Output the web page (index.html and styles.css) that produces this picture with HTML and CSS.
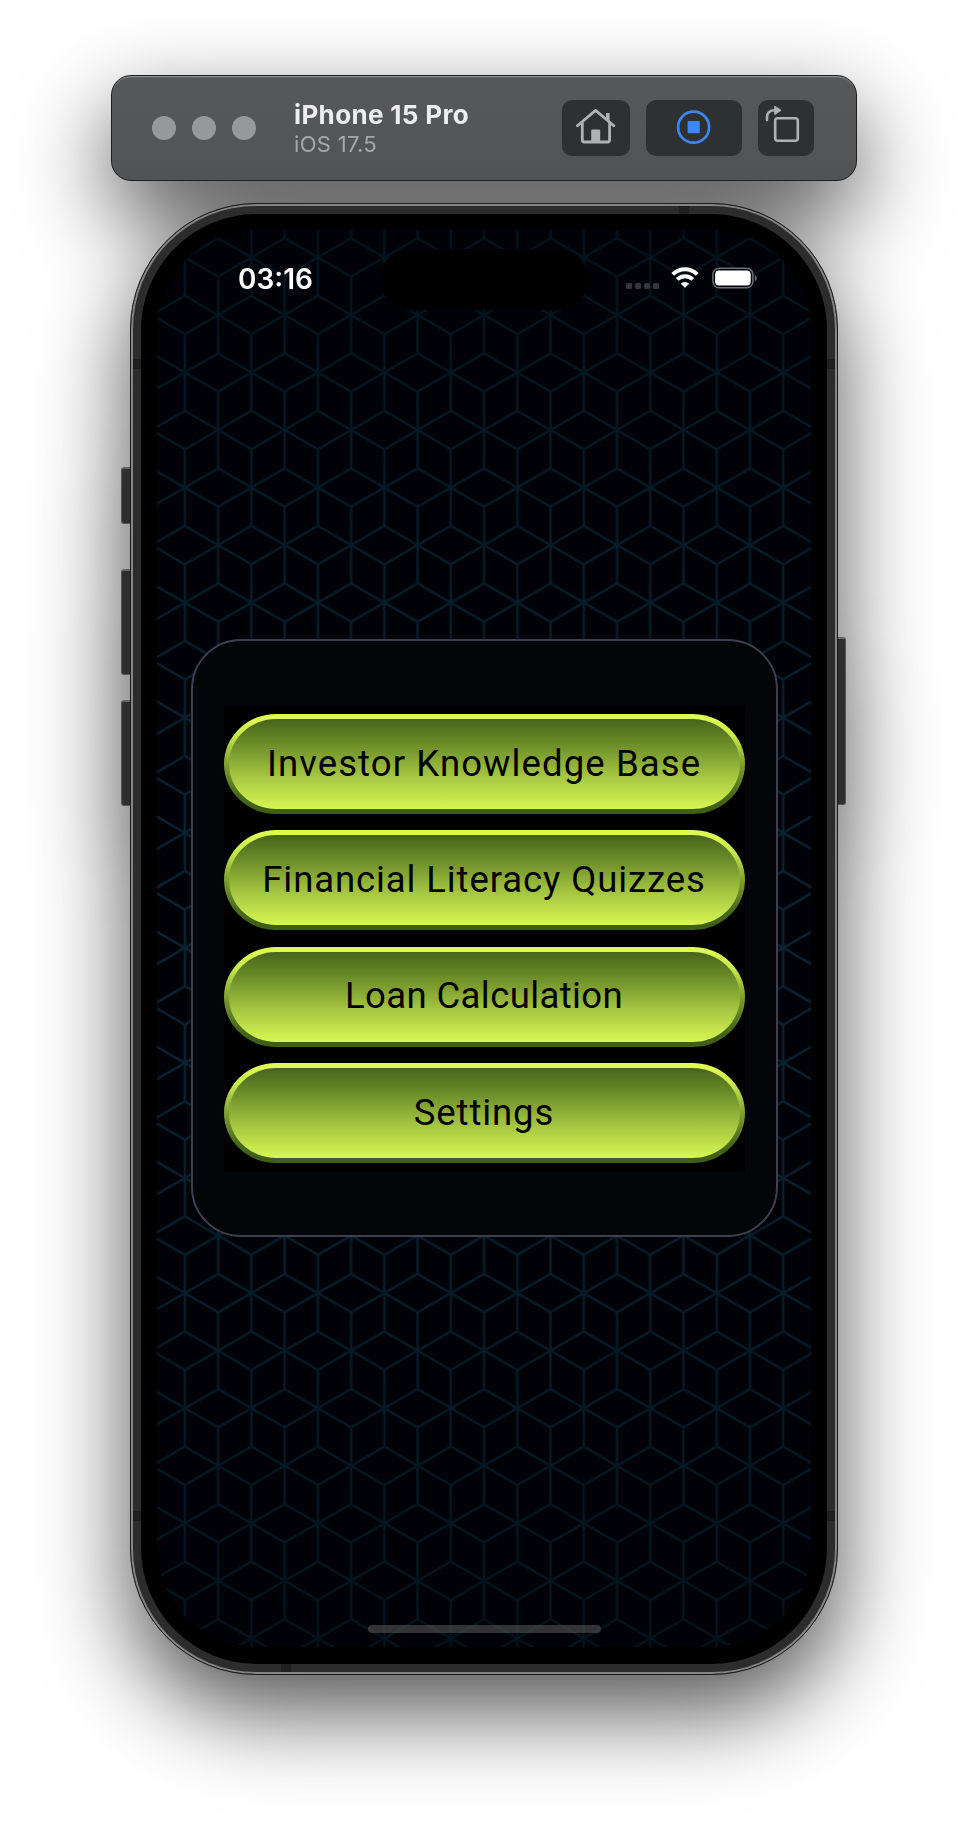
FILE: index.html
```html
<!DOCTYPE html>
<html lang="en">
<head>
<meta charset="utf-8">
<title>iPhone 15 Pro – iOS 17.5</title>
<link rel="stylesheet" href="styles.css">
</head>
<body>
<main class="simulator">
  <header class="toolbar">
    <div class="lights"><i></i><i></i><i></i></div>
    <div class="title">
      <strong>iPhone 15 Pro</strong>
      <span>iOS 17.5</span>
    </div>
    <div class="tools">
      <button class="tool tool-home" aria-label="Home">
        <svg width="40" height="38" viewBox="0 0 40 38" fill="none" stroke="#b0b1b2" stroke-width="2.8" stroke-linecap="round" stroke-linejoin="round"><path d="M1.4 18.7 19.6 3.4 37.8 18.7M6.3 15.5V33a2 2 0 0 0 2 2H31.6a2 2 0 0 0 2-2V15.5"/><path d="M30 6h3.6v9l-3.6-3.2zM15.2 35V23.4a1 1 0 0 1 1-1h7a1 1 0 0 1 1 1V35z" fill="#b0b1b2" stroke="none"/></svg>
      </button>
      <button class="tool tool-record" aria-label="Stop">
        <svg width="36" height="36" viewBox="0 0 36 36"><circle cx="17.6" cy="18.2" r="15.5" fill="none" stroke="#3d86f7" stroke-width="2.7"/><rect x="11.6" y="12" width="12.2" height="12.2" rx="1" fill="#3d86f7"/></svg>
      </button>
      <button class="tool tool-rotate" aria-label="Rotate">
        <svg width="56" height="56" viewBox="0 0 56 56" fill="none" stroke="#b0b1b2" stroke-width="2.6" stroke-linecap="round"><rect x="17.2" y="18.2" width="22.6" height="22.6" rx="2.5"/><path d="M9 20v-2.5Q9 10.3 17 10.3"/><path d="M17 6.4 23 10.3 17 14.4z" fill="#b0b1b2" stroke-width="1" stroke-linejoin="round"/></svg>
      </button>
    </div>
  </header>

  <section class="phone">
    <i class="key key-action"></i><i class="key key-up"></i><i class="key key-down"></i><i class="key key-power"></i>
    <div class="frame">
      <i class="band band-l1"></i><i class="band band-l2"></i><i class="band band-r1"></i><i class="band band-r2"></i><i class="band band-t"></i><i class="band band-b"></i>
      <div class="bezel">
        <div class="screen">
          <svg class="cubes" width="654" height="1417" aria-hidden="true">
            <defs>
              <linearGradient id="line" x1="0" y1="0" x2="0" y2="1417" gradientUnits="userSpaceOnUse">
                <stop offset="0" stop-color="#02131c"/><stop offset=".3" stop-color="#061f2b"/><stop offset=".5" stop-color="#082430"/><stop offset=".7" stop-color="#061f2b"/><stop offset="1" stop-color="#02131c"/>
              </linearGradient>
              <pattern id="cube" width="66.48" height="115.08" patternUnits="userSpaceOnUse" patternTransform="translate(27.9 27.4)">
                <g stroke="#fff" stroke-width="2.5" fill="none">
                  <path d="M0 0V38.36L33.24 57.54 66.48 38.36V0M0 115.08V76.72M66.48 115.08V76.72M0 76.72 33.24 57.54 66.48 76.72M0 0 33.24 19.18 66.48 0M0 115.08 33.24 95.9 66.48 115.08M33.24 19.18V95.9"/>
                </g>
              </pattern>
              <mask id="grid"><rect width="654" height="1417" fill="url(#cube)"/></mask>
            </defs>
            <rect width="654" height="1417" fill="url(#line)" mask="url(#grid)"/>
          </svg>
          <div class="status">
            <time>03:16</time>
            <div class="island"></div>
            <div class="indicators">
              <div class="cell"><i></i><i></i><i></i><i></i></div>
              <svg class="wifi" width="28" height="21" viewBox="0 0 28 21" fill="none" stroke="#fff" stroke-width="4"><path d="M1.7 7.3a17.4 17.4 0 0 1 24.6 0"/><path d="M6.2 12.4a11 11 0 0 1 15.6 0"/><path d="M14 20.8 9.8 16.7a5.9 5.9 0 0 1 8.4 0z" fill="#fff" stroke="none"/></svg>
              <svg class="battery" width="46" height="22" viewBox="0 0 46 22"><rect x=".9" y="1.2" width="40" height="19.6" rx="6.2" fill="none" stroke="#6d6e73" stroke-width="1.5"/><rect x="3.1" y="3.4" width="35.6" height="15.2" rx="4" fill="#fff"/><path d="M42.8 8v6.4q2-.7 2-3.2t-2-3.2z" fill="#6d6e73"/></svg>
            </div>
          </div>
          <div class="panel">
            <nav class="menu">
              <a class="item item-base"><span>Investor Knowledge Base</span></a>
              <a class="item item-quiz"><span>Financial Literacy Quizzes</span></a>
              <a class="item item-loan"><span>Loan Calculation</span></a>
              <a class="item item-settings"><span>Settings</span></a>
            </nav>
          </div>
          <div class="home-bar"></div>
        </div>
      </div>
    </div>
  </section>
</main>
</body>
</html>
```
FILE: styles.css
```css
* { box-sizing: border-box; }
body { margin: 0; background: #fff; font-family: Inter, "Liberation Sans", sans-serif; }
.simulator {
  width: 968px; height: 1826px; padding-top: 75px; overflow: hidden;
  display: flex; flex-direction: column; align-items: center;
  filter: drop-shadow(0 36px 45px rgba(0, 0, 0, .68));
}
.toolbar {
  width: 746px; height: 106px; flex: none; margin-bottom: 22px;
  display: flex; align-items: center; padding: 0 42px 0 40px;
  border: 1px solid #1d1e1f; border-radius: 20px;
  background: linear-gradient(#57585a, #525355);
  box-shadow: inset 0 2px 1px -1px #9a9b9c;
}
.lights { display: flex; gap: 16px; width: 142px; }
.lights i { width: 24px; height: 24px; border-radius: 50%; background: #97989a; }
.title { display: flex; flex-direction: column; flex: 1; }
.title strong { font-size: 26px; line-height: 31px; font-weight: 700; color: #eeeeef; letter-spacing: .35px; white-space: nowrap; }
.title span { font-size: 22px; line-height: 28px; color: #a7a8aa; letter-spacing: .3px; }
.tools { display: flex; gap: 16px; }
.tool { height: 56px; padding: 0; border: 0; border-radius: 10px; background: #2f3032; display: flex; align-items: center; justify-content: center; }
.tool-home { width: 68px; padding-bottom: 4px; }
.tool-record { width: 96px; padding-bottom: 2px; }
.tool-rotate { width: 56px; }

.phone { position: relative; width: 708px; height: 1472px; flex: none; }
.key { position: absolute; width: 10px; background: #2e2e2e; border: 1px solid #555; border-top: 2px solid #666; }
.key-action, .key-up, .key-down { left: -9px; border-radius: 3px 0 0 3px; }
.key-power { right: -8px; border-radius: 0 3px 3px 0; }
.key-action { top: 264px; height: 57px; }
.key-up { top: 366px; height: 106px; }
.key-down { top: 497px; height: 106px; }
.key-power { top: 434px; height: 168px; }
.frame {
  position: relative; width: 708px; height: 1472px; padding: 10px; border-radius: 126px;
  border: 1px solid #1c1c1c; background: #2c2c2c; box-shadow: inset 0 0 0 2px #858585;
}
.band { position: absolute; background: #202020; }
.band-l1, .band-l2 { left: 2px; width: 8px; height: 10px; }
.band-r1, .band-r2 { right: 2px; width: 8px; height: 10px; }
.band-l1, .band-r1 { top: 155px; }
.band-l2, .band-r2 { top: 1307px; }
.band-t, .band-b { width: 10px; height: 8px; }
.band-t { top: 2px; left: 548px; }
.band-b { bottom: 2px; left: 150px; }
.bezel { width: 686px; height: 1450px; padding: 16px; background: #000; border-radius: 116px; }
.screen {
  position: relative; width: 654px; height: 1417px; border-radius: 100px; overflow: hidden;
  background: #010208; display: flex; flex-direction: column; align-items: center;
}
.cubes { position: absolute; inset: 0; }
.status { position: relative; width: 654px; height: 409px; display: grid; grid-template-columns: 223px 208px 223px; align-items: start; }
.status time { padding: 32px 0 0 81px; font-size: 28px; line-height: 34px; font-weight: 600; color: #fff; letter-spacing: 0; }
.island { margin-top: 19px; height: 61px; border-radius: 31px; background: #000; }
.indicators { display: flex; padding: 37px 0 0 38px; align-items: flex-start; }
.cell { display: flex; gap: 3px; padding-top: 16px; width: 45px; }
.cell i { width: 6px; height: 6px; border-radius: 1.5px; background: #35363b; }
.wifi { margin-right: 13px; }
.panel {
  position: relative; width: 587px; height: 598px; padding: 64.5px 31px;
  border: 2px solid #3d3f4e; border-radius: 50px; background: #040508;
}
.menu { width: 521px; height: 466px; padding-top: 8.5px; display: flex; flex-direction: column; gap: 16.4px; background: #000; }
.item {
  height: 100px; flex: none; padding: 5px; border-radius: 52px / 50px;
  background: linear-gradient(#def954 5%, #c6e94a 22%, #7f9f30 50%, #4a6a1c 80%, #3f5f18 95%);
}
.item span {
  display: flex; height: 90px; align-items: center; justify-content: center; border-radius: 47px / 45px; padding-bottom: 2px;
  background: linear-gradient(#47641b, #6f902a 30%, #a2c340 62%, #d7f753);
  font-family: Roboto, "Liberation Sans", sans-serif; font-size: 36.5px; color: #000; white-space: nowrap;
}
.item-base span { letter-spacing: 1.1px; }
.item-quiz span { letter-spacing: .9px; }
.item-loan span { letter-spacing: .4px; }
.item-settings span { letter-spacing: .9px; }
.home-bar { position: relative; left: .5px; margin-top: 388px; width: 233px; height: 8px; border-radius: 4px; background: rgba(80, 80, 82, .62); }
```
